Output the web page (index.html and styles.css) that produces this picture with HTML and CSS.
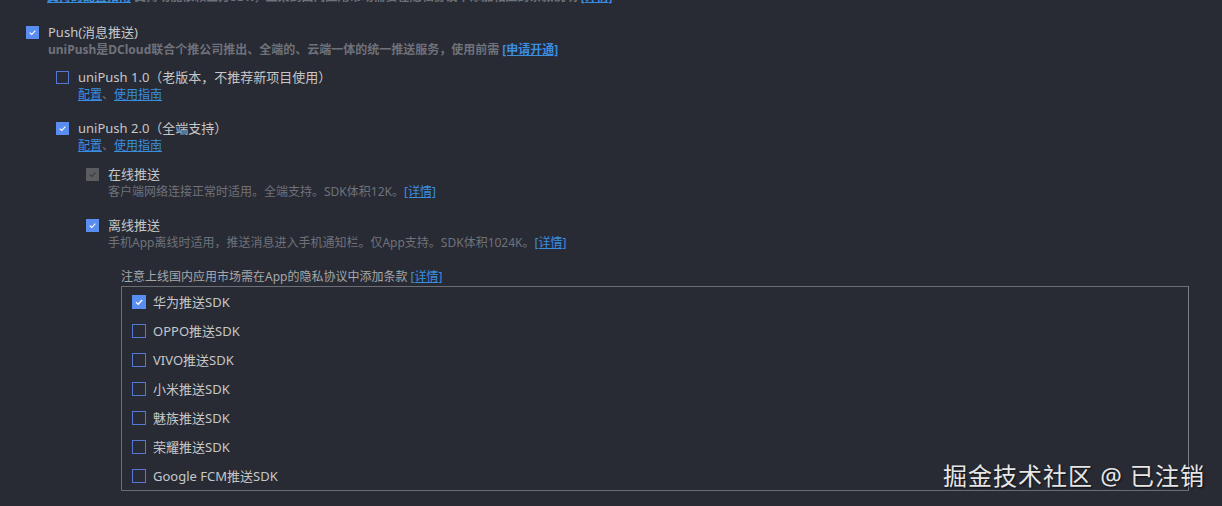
FILE: index.html
```html
<!DOCTYPE html>
<html lang="zh-CN">
<head>
  <meta charset="UTF-8" />
  <title>App模块配置 - Push</title>
  <link rel="stylesheet" href="styles.css">
</head>
<body>
  <div class="panel">
    <div class="cut-line">
      <a href="#">支持的配置指南</a> 支持功能依赖三方SDK，上架到国内应用市场需要在隐私协议中添加相应的条款说明 <a href="#">[详情]</a>
    </div>

    <div class="item">
      <div class="row">
        <span class="cb checked"><svg viewBox="0 0 13 13"><path d="M3.2 6.6 L5.6 8.9 L9.9 4.3" /></svg></span>
        <span class="title">Push(消息推送)</span>
      </div>
      <div class="desc strong">uniPush是DCloud联合个推公司推出、全端的、云端一体的统一推送服务，使用前需 <a href="#">[申请开通]</a></div>

      <div class="children">
        <div class="item">
          <div class="row">
            <span class="cb"></span>
            <span class="title">uniPush 1.0（老版本，不推荐新项目使用）</span>
          </div>
          <div class="desc"><a href="#">配置</a>、<a href="#">使用指南</a></div>
        </div>

        <div class="item">
          <div class="row">
            <span class="cb checked"><svg viewBox="0 0 13 13"><path d="M3.2 6.6 L5.6 8.9 L9.9 4.3" /></svg></span>
            <span class="title">uniPush 2.0（全端支持）</span>
          </div>
          <div class="desc"><a href="#">配置</a>、<a href="#">使用指南</a></div>

          <div class="children">
            <div class="item">
              <div class="row">
                <span class="cb disabled"><svg viewBox="0 0 13 13"><path d="M3.2 6.6 L5.6 8.9 L9.9 4.3" /></svg></span>
                <span class="title">在线推送</span>
              </div>
              <div class="desc">客户端网络连接正常时适用。全端支持。SDK体积12K。<a href="#">[详情]</a></div>
            </div>

            <div class="item">
              <div class="row">
                <span class="cb checked"><svg viewBox="0 0 13 13"><path d="M3.2 6.6 L5.6 8.9 L9.9 4.3" /></svg></span>
                <span class="title">离线推送</span>
              </div>
              <div class="desc">手机App离线时适用，推送消息进入手机通知栏。仅App支持。SDK体积1024K。<a href="#">[详情]</a></div>
            </div>

            <div class="vendors">
              <div class="notice">注意上线国内应用市场需在App的隐私协议中添加条款 <a href="#">[详情]</a></div>
              <div class="vendor-box">
                <div class="vendor"><span class="cb checked"><svg viewBox="0 0 13 13"><path d="M3.2 6.6 L5.6 8.9 L9.9 4.3" /></svg></span>华为推送SDK</div>
                <div class="vendor"><span class="cb"></span>OPPO推送SDK</div>
                <div class="vendor"><span class="cb"></span>VIVO推送SDK</div>
                <div class="vendor"><span class="cb"></span>小米推送SDK</div>
                <div class="vendor"><span class="cb"></span>魅族推送SDK</div>
                <div class="vendor"><span class="cb"></span>荣耀推送SDK</div>
                <div class="vendor"><span class="cb"></span>Google FCM推送SDK</div>
              </div>
            </div>
          </div>
        </div>
      </div>
    </div>
  </div>

  <div class="watermark">掘金技术社区 @ 已注销</div>
</body>
</html>
```

FILE: styles.css
```css
html, body {
  margin: 0;
  height: 100%;
  overflow: hidden;
}
body {
  background: #282b34;
  color: #c6c7c9;
  font-family: 'Noto Sans', 'Noto Sans CJK SC', sans-serif;
  font-size: 13px;
}
a {
  color: #3a8ee0;
  text-decoration: underline;
}
.panel {
  padding: 0 0 0 26px;
}
.cut-line {
  margin: -12px 0 0 21px;
  height: 18px;
  line-height: 18px;
  font-size: 12px;
  font-weight: bold;
  color: #6f7279;
  white-space: nowrap;
}
.cut-line + .item {
  margin-top: 17px;
}
.item {
  margin-bottom: 15px;
}
.row {
  display: flex;
  align-items: center;
  height: 18px;
}
.title {
  line-height: 18px;
  color: #c6c7c9;
}
.desc {
  margin-left: 22px;
  line-height: 18px;
  font-size: 12px;
  color: #6f727a;
  white-space: nowrap;
}
.desc.strong {
  font-weight: bold;
  line-height: 16px;
  margin-top: 1px;
}
.children {
  margin: 10px 0 0 30px;
}
.cb {
  box-sizing: border-box;
  flex: none;
  width: 13px;
  height: 13px;
  margin-right: 9px;
  border: 1px solid #5479d4;
  display: inline-flex;
}
.cb svg {
  width: 100%;
  height: 100%;
  display: none;
}
.cb svg path {
  fill: none;
  stroke: #ffffff;
  stroke-width: 1.4;
}
.cb.checked {
  background: #5a8df0;
  border-color: #5a8df0;
}
.cb.disabled {
  background: #5b5c5f;
  border-color: #5b5c5f;
}
.cb.checked svg,
.cb.disabled svg {
  display: block;
}
.cb.disabled svg path {
  stroke: #37383b;
}
.vendors {
  margin: 16px 0 0 35px;
}
.notice {
  line-height: 18px;
  font-size: 12px;
  color: #a5a7ab;
}
.vendor-box {
  width: 1066px;
  border: 1px solid #6a6d74;
  border-right-color: #7c7f86;
}
.vendor {
  display: flex;
  align-items: center;
  height: 29px;
  padding-left: 10px;
  color: #c6c7c9;
}
.vendor .cb {
  width: 14px;
  height: 14px;
  margin-right: 7px;
}
.watermark {
  position: absolute;
  right: 17px;
  bottom: 14px;
  font-size: 24px;
  color: #e6e6e6;
  letter-spacing: 1px;
  text-shadow: 1px 1px 2px rgba(0, 0, 0, 0.7);
}
```
